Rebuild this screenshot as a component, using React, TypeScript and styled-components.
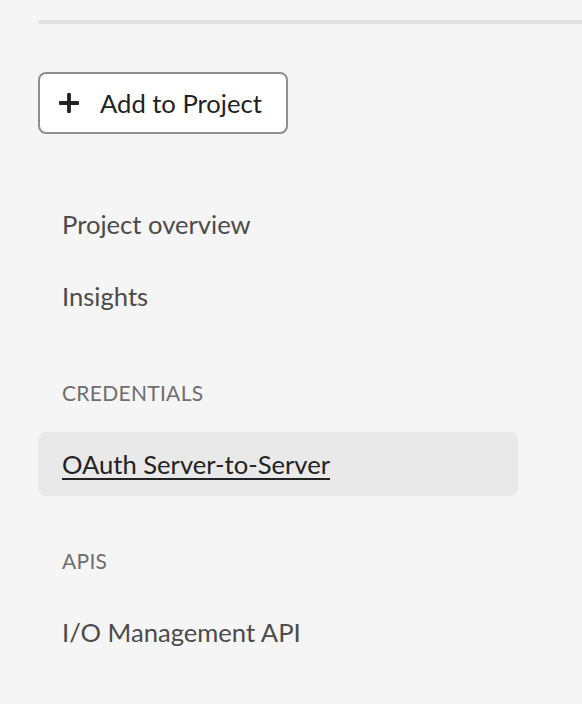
import React from "react";
import styled, { createGlobalStyle } from "styled-components";

const Global = createGlobalStyle`
  html, body { margin: 0; padding: 0; background: #f5f5f5; }
  body { font-family: Lato, "Noto Sans", sans-serif; -webkit-font-smoothing: antialiased; }
`;

const Page = styled.div`
  padding: 20px 0 0 38px;
  display: flex;
  flex-direction: column;
  align-items: flex-start;
`;

const Divider = styled.div`
  align-self: stretch;
  height: 4px;
  border-radius: 2px 0 0 2px;
  background: #e1e1e1;
`;

const AddButton = styled.button`
  margin-top: 48px;
  box-sizing: border-box;
  height: 62px;
  width: 250px;
  display: flex;
  align-items: center;
  gap: 21px;
  padding: 0 0 0 19px;
  background: #ffffff;
  border: 2px solid #8f8f8f;
  border-radius: 8px;
  font-family: Lato, "Noto Sans", sans-serif;
  font-size: 25.6px;
  color: #222222;
  cursor: pointer;
`;

const Nav = styled.nav`
  margin-top: 58px;
  width: 480px;
  display: flex;
  flex-direction: column;
`;

const Item = styled.a<{ $selected?: boolean }>`
  box-sizing: border-box;
  height: 64px;
  display: flex;
  align-items: center;
  padding-left: 24px;
  border-radius: 8px;
  font-size: 25.6px;
  color: ${(p) => (p.$selected ? "#222222" : "#4b4b4b")};
  background: ${(p) => (p.$selected ? "#e9e9e9" : "transparent")};
  text-decoration: ${(p) => (p.$selected ? "underline" : "none")};
  text-decoration-thickness: 2px;
  text-underline-offset: 4px;
  & + & { margin-top: 8px; }
`;

const Heading = styled.div`
  margin: 50px 0 24px;
  height: 30px;
  line-height: 30px;
  padding-left: 24px;
  font-size: 21px;
  letter-spacing: 0.3px;
  text-transform: uppercase;
  color: #6e6e6e;
`;

const PlusIcon = () => (
  <svg width="20" height="20" viewBox="0 0 20 20" aria-hidden="true">
    <rect x="8.1" y="0" width="3.8" height="20" rx="1" fill="#222" />
    <rect x="0" y="8.1" width="20" height="3.8" rx="1" fill="#222" />
  </svg>
);

export default function App() {
  return (
    <>
      <Global />
      <Page>
        <Divider />
        <AddButton>
          <PlusIcon />
          <span>Add to Project</span>
        </AddButton>
        <Nav>
          <Item>Project overview</Item>
          <Item>Insights</Item>
          <Heading>Credentials</Heading>
          <Item $selected>OAuth Server-to-Server</Item>
          <Heading>APIs</Heading>
          <Item>I/O Management API</Item>
        </Nav>
      </Page>
    </>
  );
}
